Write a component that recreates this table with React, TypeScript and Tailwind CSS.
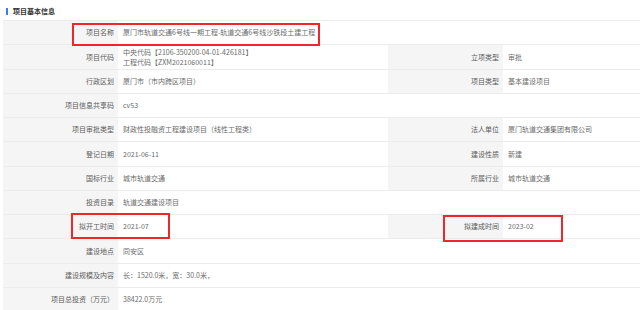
const FONT = '"Noto Sans CJK SC", "Noto Sans", sans-serif';

type Row = {
  label: string;
  value: React.ReactNode;
  label2?: string;
  value2?: string;
};

const ROWS: Row[] = [
  { label: '项目名称', value: '厦门市轨道交通6号线一期工程-轨道交通6号线沙铁段土建工程' },
  {
    label: '项目代码',
    value: (
      <div className="leading-[10px]">
        <div>中央代码【2106-350200-04-01-426181】</div>
        <div>工程代码【ZXM2021060011】</div>
      </div>
    ),
    label2: '立项类型',
    value2: '审批',
  },
  { label: '行政区划', value: '厦门市（市内跨区项目）', label2: '项目类型', value2: '基本建设项目' },
  { label: '项目信息共享码', value: 'cv53' },
  { label: '项目审批类型', value: '财政性投融资工程建设项目（线性工程类）', label2: '法人单位', value2: '厦门轨道交通集团有限公司' },
  { label: '登记日期', value: '2021-06-11', label2: '建设性质', value2: '新建' },
  { label: '国标行业', value: '城市轨道交通', label2: '所属行业', value2: '城市轨道交通' },
  { label: '投资目录', value: '轨道交通建设项目' },
  { label: '拟开工时间', value: '2021-07', label2: '拟建成时间', value2: '2023-02' },
  { label: '建设地点', value: '同安区' },
  { label: '建设规模及内容', value: '长：1520.0米，宽：30.0米，' },
  { label: '项目总投资（万元）', value: '38422.0万元' },
];

function Label({ children }: { children: React.ReactNode }) {
  return (
    <div className="flex items-center justify-end bg-[#f5f5f5] pr-[4px] text-[#5c5c5c]">{children}</div>
  );
}

function Value({ children }: { children: React.ReactNode }) {
  return <div className="flex items-center pl-[5px] text-[#6b6b6b]">{children}</div>;
}

export default function App() {
  return (
    <div className="w-[640px] h-[310px] overflow-hidden bg-white" style={{ fontFamily: FONT }}>
      <div className="flex items-center gap-[5px] pl-[6px] pt-[7px] h-[20px] pb-[5px]">
        <span className="block w-[2px] h-[7px] bg-[#3a7bf0]" />
        <span className="text-[7px] font-bold text-[#333]">项目基本信息</span>
      </div>

      <div className="relative ml-[3px] border-t border-[#ececec] text-[7px]">
        {ROWS.map((r) => (
          <div
            key={r.label}
            className="grid h-[24.25px] grid-cols-[115px_270px_115px_1fr] border-b border-[#ececec]"
          >
            <Label>{r.label}</Label>
            {r.label2 ? (
              <>
                <Value>{r.value}</Value>
                <Label>{r.label2}</Label>
                <Value>{r.value2}</Value>
              </>
            ) : (
              <div className="col-span-3 flex">
                <Value>{r.value}</Value>
              </div>
            )}
          </div>
        ))}

        <div className="absolute left-[69px] top-[2px] w-[248px] h-[23px] border-2 border-[#f0262b]" />
        <div className="absolute left-[68px] top-[192px] w-[99px] h-[26px] border-2 border-[#f0262b]" />
        <div className="absolute left-[440px] top-[194px] w-[120px] h-[27px] border-2 border-[#f0262b]" />
      </div>
    </div>
  );
}
